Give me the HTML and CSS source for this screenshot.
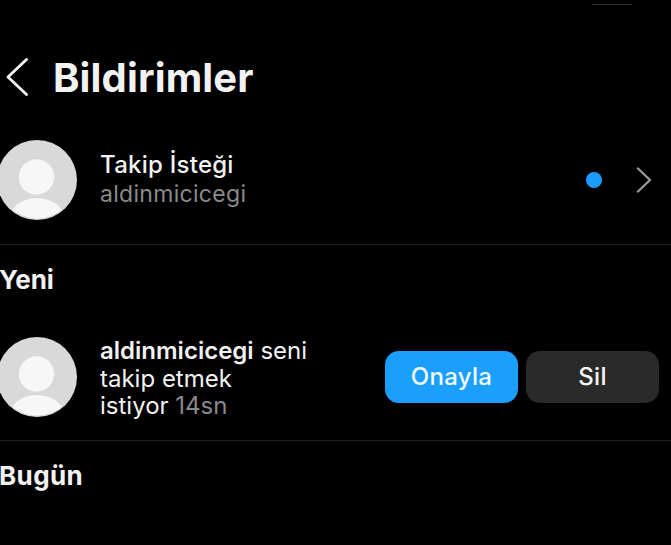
FILE: index.html
```html
<!DOCTYPE html>
<html lang="tr">
<head>
<meta charset="utf-8">
<title>Bildirimler</title>
<link rel="stylesheet" href="styles.css">
</head>
<body>
<div class="status-line"></div>
<header class="header">
  <svg class="back" width="22" height="38" viewBox="0 0 22 38"><path d="M20.5 1.5 2 19l18.5 17.5" fill="none" stroke="#f4f4f4" stroke-width="2.8" stroke-linecap="round" stroke-linejoin="round"/></svg>
  <h1 class="title">Bildirimler</h1>
</header>
<section class="row request">
  <svg class="avatar" width="80" height="80" viewBox="0 0 80 80"><defs><clipPath id="c1"><circle cx="40" cy="40" r="38.500"/></clipPath></defs><circle cx="40" cy="40" r="40" fill="#d9d9d9"/><circle cx="39.500" cy="37" r="17.700" fill="#f7f7f7"/><ellipse cx="40" cy="80" rx="28" ry="22" fill="#f7f7f7" clip-path="url(#c1)"/></svg>
  <div class="request-text">
    <div class="request-title">Takip İsteği</div>
    <div class="request-sub">aldinmicicegi</div>
  </div>
  <span class="dot"></span>
  <svg class="chevron" width="16" height="26" viewBox="0 0 16 26"><path d="M2 1.500 14 13 2 24.500" fill="none" stroke="#999" stroke-width="2.400" stroke-linecap="round" stroke-linejoin="round"/></svg>
</section>
<h2 class="section-title yeni">Yeni</h2>
<section class="row follow">
  <svg class="avatar" width="80" height="80" viewBox="0 0 80 80"><defs><clipPath id="c2"><circle cx="40" cy="40" r="38.500"/></clipPath></defs><circle cx="40" cy="40" r="40" fill="#d9d9d9"/><circle cx="39.500" cy="37" r="17.700" fill="#f7f7f7"/><ellipse cx="40" cy="80" rx="28" ry="22" fill="#f7f7f7" clip-path="url(#c2)"/></svg>
  <p class="follow-text"><strong>aldinmicicegi</strong> seni<br>takip etmek<br>istiyor <span class="time">14sn</span></p>
  <div class="actions">
    <button class="btn primary">Onayla</button>
    <button class="btn secondary">Sil</button>
  </div>
</section>
<h2 class="section-title bugun">Bugün</h2>
</body>
</html>
```
FILE: styles.css
```css
html, body {
  margin: 0;
  padding: 0;
  height: 545px;
  overflow: hidden;
  background: #000;
  color: #f2f2f2;
  font-family: Inter, "Liberation Sans", sans-serif;
}
.status-line {
  position: absolute;
  left: 592px;
  top: 4px;
  width: 40px;
  height: 1px;
  background: #2e2e2e;
}
.header {
  display: flex;
  align-items: center;
  height: 38px;
  padding: 58px 0 0 6px;
}
.back { flex: none; }
.title {
  margin: 2px 0 0 25px;
  font-size: 40px;
  font-weight: 700;
  letter-spacing: 0.15px;
  line-height: 38px;
}
.row {
  display: flex;
  align-items: center;
  box-sizing: border-box;
  margin-left: -3px;
  border-bottom: 1px solid #1c1c1c;
}
.request {
  margin-top: 44px;
  height: 105px;
  padding-bottom: 25px;
}
.follow {
  height: 104px;
  padding-bottom: 24px;
}
.avatar { flex: none; }
.request-text {
  margin-left: 23px;
  flex: 1;
}
.request-title {
  font-size: 24px;
  line-height: 28px;
  font-weight: 500;
  letter-spacing: 0.25px;
}
.request-sub {
  font-size: 23px;
  line-height: 30px;
  letter-spacing: 0.3px;
  color: #8a8a8a;
}
.dot {
  width: 16px;
  height: 16px;
  border-radius: 50%;
  background: #1a9bff;
  margin-right: 34px;
}
.chevron { margin-right: 19px; }
.section-title {
  margin: 0 0 0 -1px;
  font-size: 26px;
  line-height: 30px;
  font-weight: 700;
}
.yeni { padding-top: 20px; height: 92px; box-sizing: border-box; }
.bugun { padding-top: 20px; letter-spacing: 0.4px; }
.follow-text {
  margin: 4px 0 0 23px;
  flex: 1;
  font-size: 24px;
  line-height: 27.5px;
}
.follow-text strong { font-weight: 600; }
.time { color: #8a8a8a; }
.actions {
  display: flex;
  gap: 8px;
  margin-right: 12px;
}
.btn {
  width: 133px;
  height: 52px;
  border: 0;
  border-radius: 14px;
  font-family: inherit;
  font-size: 24px;
  font-weight: 500;
  letter-spacing: 0.3px;
  padding: 0;
}
.primary { background: #1a9fff; color: #f2f9ff; }
.secondary { background: #2a2a2a; color: #f5f5f5; }
```
